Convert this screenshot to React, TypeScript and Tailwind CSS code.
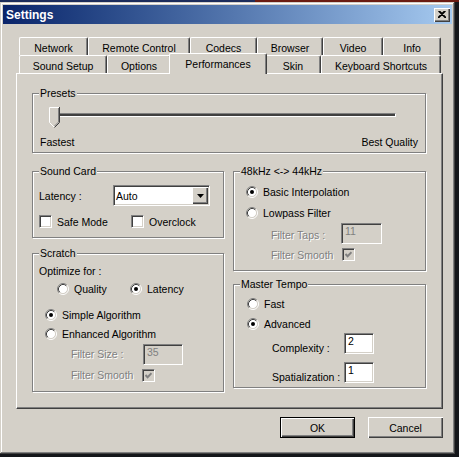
import React from 'react';

const SUNKEN =
  'border border-t-[#808080] border-l-[#808080] border-b-white border-r-white shadow-[inset_1px_1px_#404040,inset_-1px_-1px_#d4d0c8]';
const RAISED = 'shadow-[inset_1px_1px_#ffffff,inset_-1px_-1px_#404040,inset_-2px_-2px_#808080]';
const DIS = 'text-[#808080] [text-shadow:1px_1px_0_#ffffff]';

const ROW1 = [
  { label: 'Network', w: 'w-[69px]' },
  { label: 'Remote Control', w: 'w-[102px]' },
  { label: 'Codecs', w: 'w-[67px]' },
  { label: 'Browser', w: 'w-[66px]' },
  { label: 'Video', w: 'w-[60px]' },
  { label: 'Info', w: 'w-[58px]' },
];

const ROW2 = [
  { label: 'Sound Setup', w: 'w-[88px]' },
  { label: 'Options', w: 'w-[64px]' },
  { label: 'Performances', w: 'w-[98px]', active: true },
  { label: 'Skin', w: 'w-[56px]' },
  { label: 'Keyboard Shortcuts', w: 'w-[120px]' },
];

function Group({ title, className, children }: { title: string; className: string; children: React.ReactNode }) {
  return (
    <div className={`relative border border-[#808080] shadow-[inset_1px_1px_#ffffff,1px_1px_#ffffff] ${className}`}>
      <span className="absolute -top-[7px] left-[6px] bg-[#d4d0c8] px-[1px] leading-[12px]">{title}</span>
      {children}
    </div>
  );
}

function Radio({ checked }: { checked?: boolean }) {
  return (
    <svg width="12" height="12" viewBox="0 0 12 12" className="shrink-0">
      <circle cx="6" cy="6" r="4.5" fill="#ffffff" />
      <path d="M2.11 9.89 A5.5 5.5 0 0 1 9.89 2.11" stroke="#808080" fill="none" />
      <path d="M9.89 2.11 A5.5 5.5 0 0 1 2.11 9.89" stroke="#ffffff" fill="none" />
      <path d="M2.82 9.18 A4.5 4.5 0 0 1 9.18 2.82" stroke="#404040" fill="none" />
      <path d="M9.18 2.82 A4.5 4.5 0 0 1 2.82 9.18" stroke="#d4d0c8" fill="none" />
      {checked && <circle cx="6" cy="6" r="2" fill="#000000" />}
    </svg>
  );
}

function Check({ checked, disabled }: { checked?: boolean; disabled?: boolean }) {
  return (
    <span
      className={`${SUNKEN} flex h-[13px] w-[13px] shrink-0 items-center justify-center ${
        disabled ? 'bg-[#d4d0c8]' : 'bg-white'
      }`}
    >
      {checked && (
        <svg width="7" height="7" viewBox="0 0 7 7">
          <path d="M0.5 3 L2.6 5.2 L6.5 1.2" stroke={disabled ? '#808080' : '#000000'} strokeWidth="2" fill="none" />
        </svg>
      )}
    </span>
  );
}

function Field({ value, w, disabled }: { value: string; w: string; disabled?: boolean }) {
  return (
    <div
      className={`${SUNKEN} ${w} h-[21px] pl-[3px] pt-[1px] leading-[12px] ${
        disabled ? 'bg-[#d4d0c8] text-[#808080]' : 'bg-white'
      }`}
    >
      {value}
    </div>
  );
}

function RadioRow({ label, checked, className }: { label: string; checked?: boolean; className: string }) {
  return (
    <div className={`flex items-center gap-[5px] ${className}`}>
      <Radio checked={checked} />
      <span className="leading-[12px]">{label}</span>
    </div>
  );
}

export default function App() {
  return (
    <div className="relative h-[457px] w-[459px] overflow-hidden bg-[#14161a] font-['Liberation_Sans',Arial,sans-serif] text-[10.5px] text-black">
      <div className="flex h-[2px]">
        <div className="w-[255px] bg-[#1d2d5c]" />
        <div className="flex-1 bg-[#6b1c12]" />
      </div>

      <div className="flex h-[452px] w-[455px] flex-col bg-[#d4d0c8] p-[3px] shadow-[inset_-1px_-1px_#404040,inset_1px_1px_#d4d0c8,inset_-2px_-2px_#808080,inset_2px_2px_#ffffff]">
        {/* title bar */}
        <div className="flex h-[19px] shrink-0 items-center justify-between bg-gradient-to-r from-[#0a246a] to-[#a6caf0] pl-[3px] pr-[2px]">
          <span className="text-[12px] font-bold leading-[14px] text-white">Settings</span>
          <button className={`flex h-[14px] w-[16px] items-center justify-center bg-[#d4d0c8] ${RAISED}`}>
            <svg width="8" height="7" viewBox="0 0 8 7">
              <path d="M0.5 0 L7.5 7 M7.5 0 L0.5 7 M1.5 0 L8.5 7 M6.5 0 L-0.5 7" stroke="#000000" strokeWidth="1.2" />
            </svg>
          </button>
        </div>

        {/* tabs */}
        <div className="ml-[16px] mt-[13px] flex flex-col">
          <div className="flex h-[18px]">
            {ROW1.map((t) => (
              <div
                key={t.label}
                className={`${t.w} flex h-[18px] items-center justify-center rounded-t-[2px] border-l border-r border-t border-l-white border-r-[#404040] border-t-white pt-[3px] leading-[12px] shadow-[inset_-1px_0_#808080]`}
              >
                {t.label}
              </div>
            ))}
          </div>
          <div className="flex h-[18px] items-end">
            {ROW2.map((t) =>
              t.active ? (
                <div
                  key={t.label}
                  className={`${t.w} relative z-10 -mx-[2px] -mb-px flex h-[21px] items-center justify-center rounded-t-[2px] border-l border-r border-t border-l-white border-r-[#404040] border-t-white bg-[#d4d0c8] leading-[12px] shadow-[inset_-1px_0_#808080]`}
                >
                  {t.label}
                </div>
              ) : (
                <div
                  key={t.label}
                  className={`${t.w} flex h-[18px] items-center justify-center rounded-t-[2px] border-l border-r border-t border-l-white border-r-[#404040] border-t-white pt-[3px] leading-[12px] shadow-[inset_-1px_0_#808080]`}
                >
                  {t.label}
                </div>
              )
            )}
          </div>
        </div>

        {/* panel */}
        <div className="ml-[13px] h-[336px] w-[427px] shrink-0 border border-b-[#404040] border-l-white border-r-[#404040] border-t-white pl-[15px] pt-[19px] shadow-[inset_-1px_-1px_#808080]">
          <Group title="Presets" className="h-[60px] w-[394px] pt-[13px]">
            <div className="flex pl-[16px]">
              <svg width="11" height="21" viewBox="0 0 11 21" className="relative z-10 shrink-0">
                <path d="M0 0 H11 V15.5 L5.5 21 L0 15.5 Z" fill="#d4d0c8" />
                <path d="M0.5 15.5 V0.5 H10" stroke="#ffffff" fill="none" />
                <path d="M0.5 15.5 L5 20" stroke="#ffffff" fill="none" />
                <path d="M10.5 0 V15.5 L5.5 20.5" stroke="#404040" fill="none" />
                <path d="M9.5 1 V15 L5.5 19" stroke="#808080" fill="none" />
              </svg>
              <div className="-ml-[5px] mt-[6px] h-[4px] w-[341px] border-b border-r border-t border-b-white border-r-white border-t-[#808080] bg-[#404040]" />
            </div>
            <div className="mt-[8px] flex justify-between px-[7px] leading-[12px]">
              <span>Fastest</span>
              <span>Best Quality</span>
            </div>
          </Group>

          <div className="mt-[18px] flex gap-[9px]">
            {/* left column */}
            <div className="flex flex-col">
              <Group title="Sound Card" className="h-[67px] w-[192px] pl-[6px] pt-[13px]">
                <div className="flex h-[21px] items-center">
                  <span className="w-[74px] leading-[12px]">Latency :</span>
                  <div className={`${SUNKEN} flex h-[21px] w-[97px] items-center justify-between bg-white p-[1px]`}>
                    <span className="pl-[1px] leading-[12px]">Auto</span>
                    <div className={`flex h-[17px] w-[16px] items-center justify-center bg-[#d4d0c8] ${RAISED}`}>
                      <svg width="7" height="4" viewBox="0 0 7 4">
                        <path d="M0 0 H7 L3.5 4 Z" fill="#000000" />
                      </svg>
                    </div>
                  </div>
                </div>
                <div className="mt-[9px] flex h-[13px] items-center">
                  <div className="flex w-[92px] items-center gap-[5px]">
                    <Check />
                    <span className="leading-[12px]">Safe Mode</span>
                  </div>
                  <div className="flex items-center gap-[5px]">
                    <Check />
                    <span className="leading-[12px]">Overclock</span>
                  </div>
                </div>
              </Group>

              <Group title="Scratch" className="mt-[15px] h-[139px] w-[192px] pt-[9px]">
                <div className="flex h-[16px] items-center pl-[6px] leading-[12px]">Optimize for :</div>
                <div className="flex h-[20px] items-center pl-[24px]">
                  <RadioRow label="Quality" className="w-[73px]" />
                  <RadioRow label="Latency" checked className="" />
                </div>
                <RadioRow label="Simple Algorithm" checked className="mt-[6px] h-[20px] pl-[12px]" />
                <RadioRow label="Enhanced Algorithm" className="h-[18px] pl-[12px]" />
                <div className="flex h-[22px] items-center pl-[38px]">
                  <span className={`w-[72px] leading-[12px] ${DIS}`}>Filter Size :</span>
                  <Field value="35" w="w-[40px]" disabled />
                </div>
                <div className="flex h-[20px] items-center pl-[38px]">
                  <span className={`w-[71px] leading-[12px] ${DIS}`}>Filter Smooth</span>
                  <Check checked disabled />
                </div>
              </Group>
            </div>

            {/* right column */}
            <div className="flex flex-col">
              <Group title="48kHz <-> 44kHz" className="h-[100px] w-[193px] pt-[9px]">
                <RadioRow label="Basic Interpolation" checked className="h-[21px] pl-[12px]" />
                <RadioRow label="Lowpass Filter" className="h-[21px] pl-[12px]" />
                <div className="flex h-[21px] items-center pl-[37px]">
                  <span className={`mt-[3px] w-[70px] leading-[12px] ${DIS}`}>Filter Taps :</span>
                  <Field value="11" w="w-[41px]" disabled />
                </div>
                <div className="flex h-[21px] items-center pl-[37px]">
                  <span className={`w-[71px] leading-[12px] ${DIS}`}>Filter Smooth</span>
                  <Check checked disabled />
                </div>
              </Group>

              <Group title="Master Tempo" className="mt-[13px] h-[104px] w-[193px] pt-[9px]">
                <RadioRow label="Fast" className="h-[20px] pl-[13px]" />
                <RadioRow label="Advanced" checked className="h-[19px] pl-[13px]" />
                <div className="flex h-[21px] items-start pl-[38px]">
                  <span className="mt-[9px] w-[72px] leading-[12px]">Complexity :</span>
                  <Field value="2" w="w-[30px]" />
                </div>
                <div className="mt-[8px] flex h-[21px] items-start pl-[38px]">
                  <span className="mt-[9px] w-[72px] leading-[12px]">Spatialization :</span>
                  <Field value="1" w="w-[30px]" />
                </div>
              </Group>
            </div>
          </div>
        </div>

        {/* buttons */}
        <div className="mt-[8px] flex justify-end gap-[13px] pr-[9px]">
          <button className="h-[21px] w-[75px] border border-black bg-[#d4d0c8] leading-[12px] shadow-[inset_1px_1px_#ffffff,inset_-1px_-1px_#404040,inset_-2px_-2px_#808080]">
            OK
          </button>
          <button className={`h-[21px] w-[75px] bg-[#d4d0c8] leading-[12px] ${RAISED}`}>Cancel</button>
        </div>
      </div>
    </div>
  );
}
